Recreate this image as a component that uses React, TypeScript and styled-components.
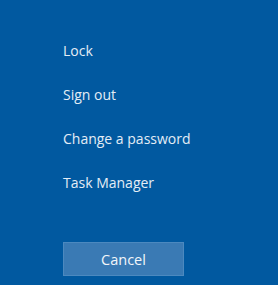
import React from "react";
import styled, { createGlobalStyle } from "styled-components";

const GlobalStyle = createGlobalStyle`
  html, body {
    margin: 0;
    padding: 0;
    background: #0159a0;
  }
`;

const Screen = styled.div`
  width: 278px;
  height: 285px;
  box-sizing: border-box;
  padding: 41px 0 0 63px;
  background: #0159a0;
  font-family: "Open Sans", "Noto Sans", sans-serif;
  display: flex;
  flex-direction: column;
`;

const Menu = styled.ul`
  list-style: none;
  margin: 0;
  padding: 0;
  display: flex;
  flex-direction: column;
  gap: 24px;
`;

const MenuItem = styled.li`
  color: #e4edf6;
  font-size: 14px;
  line-height: 20px;
  cursor: pointer;
`;

const CancelButton = styled.button`
  margin-top: 49px;
  width: 121px;
  height: 34px;
  box-sizing: border-box;
  background: #3a7ab4;
  border: 1px solid #4c89bf;
  color: #f2f6fa;
  font-family: inherit;
  font-size: 14.5px;
  padding: 0;
`;

const items = ["Lock", "Sign out", "Change a password", "Task Manager"];

const App = () => {
  return (
    <>
      <GlobalStyle />
      <Screen>
        <Menu>
          {items.map((item) => (
            <MenuItem key={item}>{item}</MenuItem>
          ))}
        </Menu>
        <CancelButton>Cancel</CancelButton>
      </Screen>
    </>
  );
};

export default App;
